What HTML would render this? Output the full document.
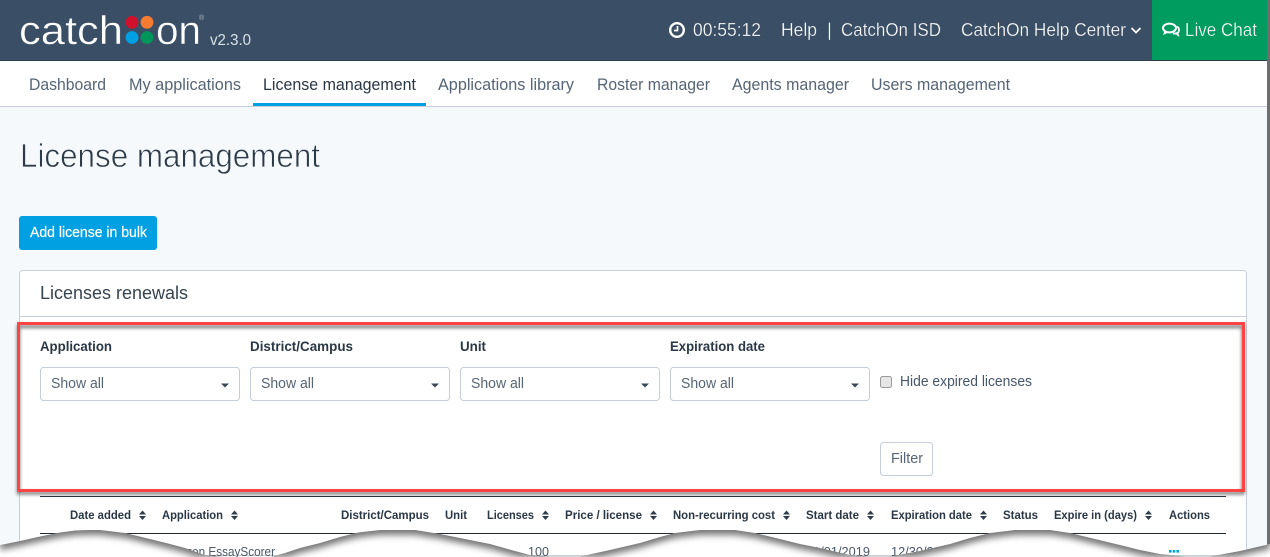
<!DOCTYPE html>
<html>
<head>
<meta charset="utf-8">
<style>
html,body{margin:0;padding:0;background:#fff;width:1270px;height:557px;overflow:hidden}
svg{display:block}
text{font-family:"Liberation Sans",sans-serif}
.nav{font-size:16.5px;fill:#566575}
.top{font-size:18.5px;fill:#fff;stroke:#3a4f66;stroke-width:.3}
.lab{font-size:14px;font-weight:700;fill:#2a3745}
.sel{font-size:14.5px;fill:#566575}
.th{font-size:12.3px;font-weight:700;fill:#2a3745}
.td{font-size:13px;fill:#4a5868}
.box{fill:#fff;stroke:#c5ced9;stroke-width:1}
.car{fill:#3a4654}
.srt{fill:#2f3d4c}
</style>
</head>
<body>
<svg width="1270" height="557" viewBox="0 0 1270 557" xmlns="http://www.w3.org/2000/svg">
<defs>
<filter id="b" x="-5%" y="-10%" width="110%" height="120%"><feGaussianBlur stdDeviation="1.6"/></filter>
<filter id="s" filterUnits="userSpaceOnUse" x="0" y="500" width="1270" height="57" color-interpolation-filters="sRGB">
  <feComponentTransfer in="SourceAlpha" result="inv"><feFuncA type="table" tableValues="1 0"/></feComponentTransfer>
  <feOffset in="inv" dy="5" result="off"/>
  <feGaussianBlur in="off" stdDeviation="3.4" result="bl"/>
  <feComposite in="bl" in2="SourceAlpha" operator="in" result="cut"/>
  <feComponentTransfer in="cut" result="sh"><feFuncA type="linear" slope=".54"/></feComponentTransfer>
  <feMerge><feMergeNode in="SourceGraphic"/><feMergeNode in="sh"/></feMerge>
</filter>
</defs>

<!-- page background -->
<rect width="1270" height="557" fill="#f5f9fc"/>

<!-- top bar -->
<rect width="1270" height="60" fill="#3a4f66"/>
<rect y="60" width="1270" height="1" fill="#2c3d50"/>
<rect x="1152" width="115" height="60" fill="#009b5e"/>

<!-- logo -->
<text x="19" y="44" font-size="40" fill="#fff" stroke="#3a4f66" stroke-width=".4" textLength="104" lengthAdjust="spacingAndGlyphs">catch</text>
<circle cx="132" cy="22.3" r="6.4" fill="#d0112b"/>
<circle cx="147" cy="22.3" r="6.4" fill="#f47b30"/>
<circle cx="132" cy="37.5" r="6.4" fill="#00a0e3"/>
<circle cx="147" cy="37.5" r="6.4" fill="#00955a"/>
<text x="156" y="44" font-size="40" fill="#fff" stroke="#3a4f66" stroke-width=".4" textLength="45" lengthAdjust="spacingAndGlyphs">on</text>
<text x="199" y="20" font-size="7" fill="#b5bfca">®</text>
<text x="210" y="45" font-size="16" fill="#d9e0e7" textLength="41" lengthAdjust="spacingAndGlyphs">v2.3.0</text>

<!-- top right -->
<circle cx="677" cy="30" r="6.8" fill="none" stroke="#fff" stroke-width="2.4"/>
<path d="M677.5,26V30.5H674" fill="none" stroke="#fff" stroke-width="1.7"/>
<text class="top" x="693" y="36" textLength="68" lengthAdjust="spacingAndGlyphs">00:55:12</text>
<text class="top" x="781" y="36" textLength="36" lengthAdjust="spacingAndGlyphs">Help</text>
<text class="top" x="827" y="36">|</text>
<text class="top" x="841" y="36" textLength="100" lengthAdjust="spacingAndGlyphs">CatchOn ISD</text>
<text class="top" x="961" y="36" textLength="165" lengthAdjust="spacingAndGlyphs">CatchOn Help Center</text>
<path d="M1131.5,28 L1136,32.5 L1140.5,28" fill="none" stroke="#fff" stroke-width="1.7"/>
<ellipse cx="1169.5" cy="28" rx="6.5" ry="4.4" fill="none" stroke="#fff" stroke-width="2"/>
<path d="M1173,33.5 Q1178.5,34 1179,30.5 Q1179.3,28 1177,26.5" fill="none" stroke="#fff" stroke-width="1.8"/>
<path d="M1164.5,31 L1163,35 L1168.5,32.5 Z M1174,33 L1179.5,37 L1178,32 Z" fill="#fff"/>
<text class="top" x="1185" y="36" textLength="72" lengthAdjust="spacingAndGlyphs" style="stroke:#009b5e">Live Chat</text>

<!-- nav -->
<rect y="61" width="1267" height="45" fill="#fff"/>
<rect y="106" width="1267" height="1" fill="#c5ced9"/>
<rect x="253" y="103" width="173" height="3" fill="#00a0e3"/>
<text class="nav" x="29" y="90" textLength="77" lengthAdjust="spacingAndGlyphs">Dashboard</text>
<text class="nav" x="129" y="90" textLength="112" lengthAdjust="spacingAndGlyphs">My applications</text>
<text class="nav" x="263" y="90" textLength="153" lengthAdjust="spacingAndGlyphs" style="fill:#2a3745">License management</text>
<text class="nav" x="438" y="90" textLength="136" lengthAdjust="spacingAndGlyphs">Applications library</text>
<text class="nav" x="597" y="90" textLength="113" lengthAdjust="spacingAndGlyphs">Roster manager</text>
<text class="nav" x="732" y="90" textLength="117" lengthAdjust="spacingAndGlyphs">Agents manager</text>
<text class="nav" x="871" y="90" textLength="139" lengthAdjust="spacingAndGlyphs">Users management</text>

<!-- title and button -->
<text x="20" y="167" font-size="33" fill="#2d3a48" stroke="#f5f9fc" stroke-width=".7" textLength="300" lengthAdjust="spacingAndGlyphs">License management</text>
<rect x="19" y="216" width="138" height="34" rx="3" fill="#00a0e3"/>
<text x="30" y="237" font-size="14.5" fill="#fff" stroke="#fff" stroke-width=".2" textLength="117" lengthAdjust="spacingAndGlyphs">Add license in bulk</text>

<!-- card -->
<rect class="box" x="19.5" y="270.5" width="1227" height="285" rx="3"/>
<rect x="20" y="316" width="1226" height="1" fill="#c5ced9"/>
<text x="40" y="299" font-size="18" fill="#36444f" textLength="148" lengthAdjust="spacingAndGlyphs">Licenses renewals</text>

<!-- filters -->
<text class="lab" x="40" y="351" textLength="72" lengthAdjust="spacingAndGlyphs">Application</text>
<text class="lab" x="250" y="351" textLength="103" lengthAdjust="spacingAndGlyphs">District/Campus</text>
<text class="lab" x="460" y="351" textLength="26" lengthAdjust="spacingAndGlyphs">Unit</text>
<text class="lab" x="670" y="351" textLength="95" lengthAdjust="spacingAndGlyphs">Expiration date</text>

<rect class="box" x="40.5" y="367.5" width="199" height="33" rx="3"/>
<rect class="box" x="250.5" y="367.5" width="199" height="33" rx="3"/>
<rect class="box" x="460.5" y="367.5" width="199" height="33" rx="3"/>
<rect class="box" x="670.5" y="367.5" width="199" height="33" rx="3"/>
<text class="sel" x="51" y="388" textLength="53" lengthAdjust="spacingAndGlyphs">Show all</text>
<text class="sel" x="261" y="388" textLength="53" lengthAdjust="spacingAndGlyphs">Show all</text>
<text class="sel" x="471" y="388" textLength="53" lengthAdjust="spacingAndGlyphs">Show all</text>
<text class="sel" x="681" y="388" textLength="53" lengthAdjust="spacingAndGlyphs">Show all</text>
<path class="car" d="M221,383.5h8l-4,4z"/>
<path class="car" d="M431,383.5h8l-4,4z"/>
<path class="car" d="M641,383.5h8l-4,4z"/>
<path class="car" d="M851,383.5h8l-4,4z"/>

<rect x="880.5" y="376.5" width="11" height="11" rx="2" fill="#e6e6e6" stroke="#9a9a9a"/>
<text class="sel" x="900" y="386" textLength="132" lengthAdjust="spacingAndGlyphs" style="fill:#46566a">Hide expired licenses</text>
<rect class="box" x="880.5" y="442.5" width="52" height="33" rx="3"/>
<text class="sel" x="891" y="463" textLength="32" lengthAdjust="spacingAndGlyphs">Filter</text>

<!-- table -->
<rect x="40" y="496" width="1186" height="1" fill="#232b33"/>
<rect x="40" y="533" width="1186" height="1" fill="#232b33"/>
<text class="th" x="70" y="519" textLength="61" lengthAdjust="spacingAndGlyphs">Date added</text>
<text class="th" x="162" y="519" textLength="61" lengthAdjust="spacingAndGlyphs">Application</text>
<text class="th" x="341" y="519" textLength="88" lengthAdjust="spacingAndGlyphs">District/Campus</text>
<text class="th" x="445" y="519" textLength="22" lengthAdjust="spacingAndGlyphs">Unit</text>
<text class="th" x="487" y="519" textLength="47" lengthAdjust="spacingAndGlyphs">Licenses</text>
<text class="th" x="565" y="519" textLength="77" lengthAdjust="spacingAndGlyphs">Price / license</text>
<text class="th" x="673" y="519" textLength="102" lengthAdjust="spacingAndGlyphs">Non-recurring cost</text>
<text class="th" x="806" y="519" textLength="53" lengthAdjust="spacingAndGlyphs">Start date</text>
<text class="th" x="891" y="519" textLength="81" lengthAdjust="spacingAndGlyphs">Expiration date</text>
<text class="th" x="1003" y="519" textLength="35" lengthAdjust="spacingAndGlyphs">Status</text>
<text class="th" x="1054" y="519" textLength="83" lengthAdjust="spacingAndGlyphs">Expire in (days)</text>
<text class="th" x="1169" y="519" textLength="41" lengthAdjust="spacingAndGlyphs">Actions</text>
<path class="srt" d="M139,514.5l3.5,-4l3.5,4z M139,516l3.5,4l3.5,-4z"/>
<path class="srt" d="M231,514.5l3.5,-4l3.5,4z M231,516l3.5,4l3.5,-4z"/>
<path class="srt" d="M542,514.5l3.5,-4l3.5,4z M542,516l3.5,4l3.5,-4z"/>
<path class="srt" d="M650,514.5l3.5,-4l3.5,4z M650,516l3.5,4l3.5,-4z"/>
<path class="srt" d="M783,514.5l3.5,-4l3.5,4z M783,516l3.5,4l3.5,-4z"/>
<path class="srt" d="M867,514.5l3.5,-4l3.5,4z M867,516l3.5,4l3.5,-4z"/>
<path class="srt" d="M980,514.5l3.5,-4l3.5,4z M980,516l3.5,4l3.5,-4z"/>
<path class="srt" d="M1145,514.5l3.5,-4l3.5,4z M1145,516l3.5,4l3.5,-4z"/>

<text class="td" x="162" y="556" textLength="113" lengthAdjust="spacingAndGlyphs">Amazon EssayScorer</text>
<text class="td" x="528" y="556" textLength="21" lengthAdjust="spacingAndGlyphs">100</text>
<text class="td" x="806" y="556" textLength="64" lengthAdjust="spacingAndGlyphs">01/01/2019</text>
<text class="td" x="891" y="556" textLength="64" lengthAdjust="spacingAndGlyphs">12/30/2019</text>
<rect x="1169" y="550" width="2.6" height="2.6" fill="#00a0e3"/>
<rect x="1172.7" y="550" width="2.6" height="2.6" fill="#00a0e3"/>
<rect x="1176.4" y="550" width="2.6" height="2.6" fill="#00a0e3"/>

<!-- right window edge -->
<rect x="1267" y="0" width="3" height="557" fill="#6e6e6e"/>

<!-- red highlight -->
<rect x="18.5" y="326.5" width="1224.5" height="166.5" fill="none" stroke="#6f6f6f" stroke-width="3.5" filter="url(#b)" opacity=".85"/>
<rect x="18.5" y="323.5" width="1225" height="167" fill="none" stroke="#ff4343" stroke-width="3"/>

<!-- torn edge -->
<path fill="#fff" filter="url(#s)" d="M0,545 L8,543.5 L20,541 L40,536.5 L60,532.5 L75,530.5 L88,530 L100,530 L125,533 L150,539 L170,544 L185,548 L205,555 L225,557 L270,557 L285,553 L300,548 L320,543 L340,537 L358,532.5 L380,530 L415,530 L440,534 L465,539 L490,544 L515,551 L530,555 L550,556.5 L580,556.5 L610,550 L640,543 L660,537 L675,533 L700,530 L735,530 L755,533 L780,539 L800,544 L820,548 L850,555 L870,556.5 L890,556.5 L920,551 L950,544 L970,538 L990,533 L1015,530 L1050,530 L1070,533 L1095,539 L1120,545 L1140,550 L1160,554 L1185,556.5 L1210,556.5 L1240,551 L1270,544 L1270,557 L0,557 Z"/>
</svg>
</body>
</html>
